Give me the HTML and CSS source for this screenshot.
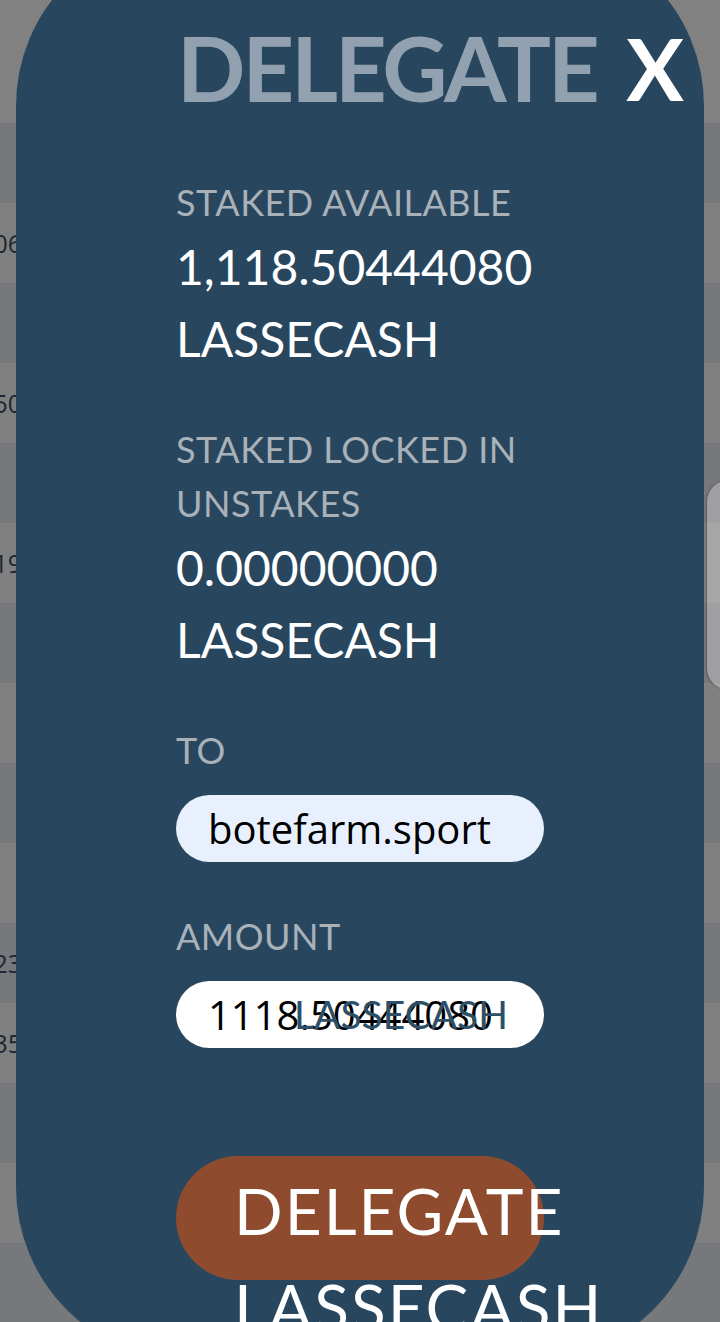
FILE: index.html
```html
<!DOCTYPE html>
<html>
<head>
<meta http-equiv="Content-Type" content="text/html; charset=utf-8">
<title>Delegate</title>
<link rel="stylesheet" href="styles.css">
</head>
<body>
<div id="page">
  <div class="top"></div>
  <div class="row dark"></div>
  <div class="row light"><div class="cell">1,306.8</div></div>
  <div class="row dark"></div>
  <div class="row light"><div class="cell">2,250.7</div></div>
  <div class="row dark"></div>
  <div class="row light"><div class="cell">4,119.2</div></div>
  <div class="row dark"></div>
  <div class="row light"></div>
  <div class="row dark"></div>
  <div class="row light"></div>
  <div class="row dark"><div class="cell">1,023.4</div></div>
  <div class="row light"><div class="cell">1,135.2</div></div>
  <div class="row dark"></div>
  <div class="row light"></div>
  <div class="row dark"></div>
</div>
<div class="sidetab"></div>

<div id="modal">
  <div class="head">
    <div class="title">DELEGATE</div>
    <div class="close">X</div>
  </div>

  <div class="field first">
    <div class="label">STAKED AVAILABLE</div>
    <div class="value">1,118.50444080 LASSECASH</div>
  </div>

  <div class="field">
    <div class="label">STAKED LOCKED IN UNSTAKES</div>
    <div class="value">0.00000000 LASSECASH</div>
  </div>

  <div class="field">
    <div class="label">TO</div>
    <div class="input autofill">botefarm.sport</div>
  </div>

  <div class="field">
    <div class="label">AMOUNT</div>
    <div class="input">1118.50444080<span class="suffix">LASSECASH</span></div>
  </div>

  <div class="button">DELEGATE LASSECASH</div>
</div>
</body>
</html>
```

FILE: styles.css
```css
html, body { margin: 0; padding: 0; }
body {
	width: 720px;
	height: 1322px;
	overflow: hidden;
	background-color: #808080;
	font-family: "Open Sans", "Noto Sans", sans-serif;
}

/* dimmed list behind the dialog */
#page .top { height: 123px; background-color: #818181; }
.row { height: 80px; display: flex; align-items: center; }
.row.dark { background-color: #77787b; }
.row.light { background-color: #808080; }
.cell {
	width: 43px;
	display: flex;
	justify-content: flex-end;
	white-space: nowrap;
	font-size: 25px;
	color: #1b2733;
}

.sidetab {
	position: absolute;
	left: 707px;
	top: 480px;
	width: 60px;
	height: 210px;
	border-radius: 22px;
	background-color: rgba(255, 255, 255, 0.3);
	box-shadow: -1px 0 2px rgba(0, 0, 0, 0.25);
}

/* the dialog */
#modal {
	position: absolute;
	left: 16px;
	top: -68px;
	width: 688px;
	height: 1429px;
	box-sizing: border-box;
	padding: 68px 20px 0 160px;
	border-radius: 174px;
	background-color: #28475f;
	font-family: Lato, "Noto Sans", sans-serif;
}
.head {
	display: flex;
	justify-content: space-between;
	height: 135px;
	font-size: 90px;
	line-height: 135px;
	font-weight: bold;
}
.title { color: #91a1b0; letter-spacing: -3px; padding-left: 1px; }
.close { color: white; font-size: 86px; }

.field { width: 368px; margin-top: 47px; }
.field.first { margin-top: 40px; }
.label {
	font-size: 36px;
	line-height: 54px;
	letter-spacing: 0.5px;
	color: #a9b1b9;
}
.value {
	margin-top: 2px;
	font-size: 48px;
	line-height: 72px;
	color: white;
}

.input {
	position: relative;
	margin-top: 18px;
	height: 67px;
	line-height: 67px;
	padding-left: 32px;
	border-radius: 34px;
	background-color: white;
	font-family: "Open Sans", "Noto Sans", sans-serif;
	font-size: 40px;
	color: black;
	white-space: nowrap;
}
.input.autofill { background-color: #e8f0fe; }
.suffix {
	position: absolute;
	left: 118px;
	top: 0;
	font-family: Lato, "Noto Sans", sans-serif;
	font-size: 39px;
	color: #2e4f68;
}

.button {
	margin-top: 108px;
	width: 368px;
	height: 124px;
	box-sizing: border-box;
	padding: 7px 0 0 58px;
	border-radius: 62px;
	background-color: #8e4b2e;
	color: white;
	font-size: 64px;
	line-height: 96px;
	letter-spacing: 2px;
}
```
